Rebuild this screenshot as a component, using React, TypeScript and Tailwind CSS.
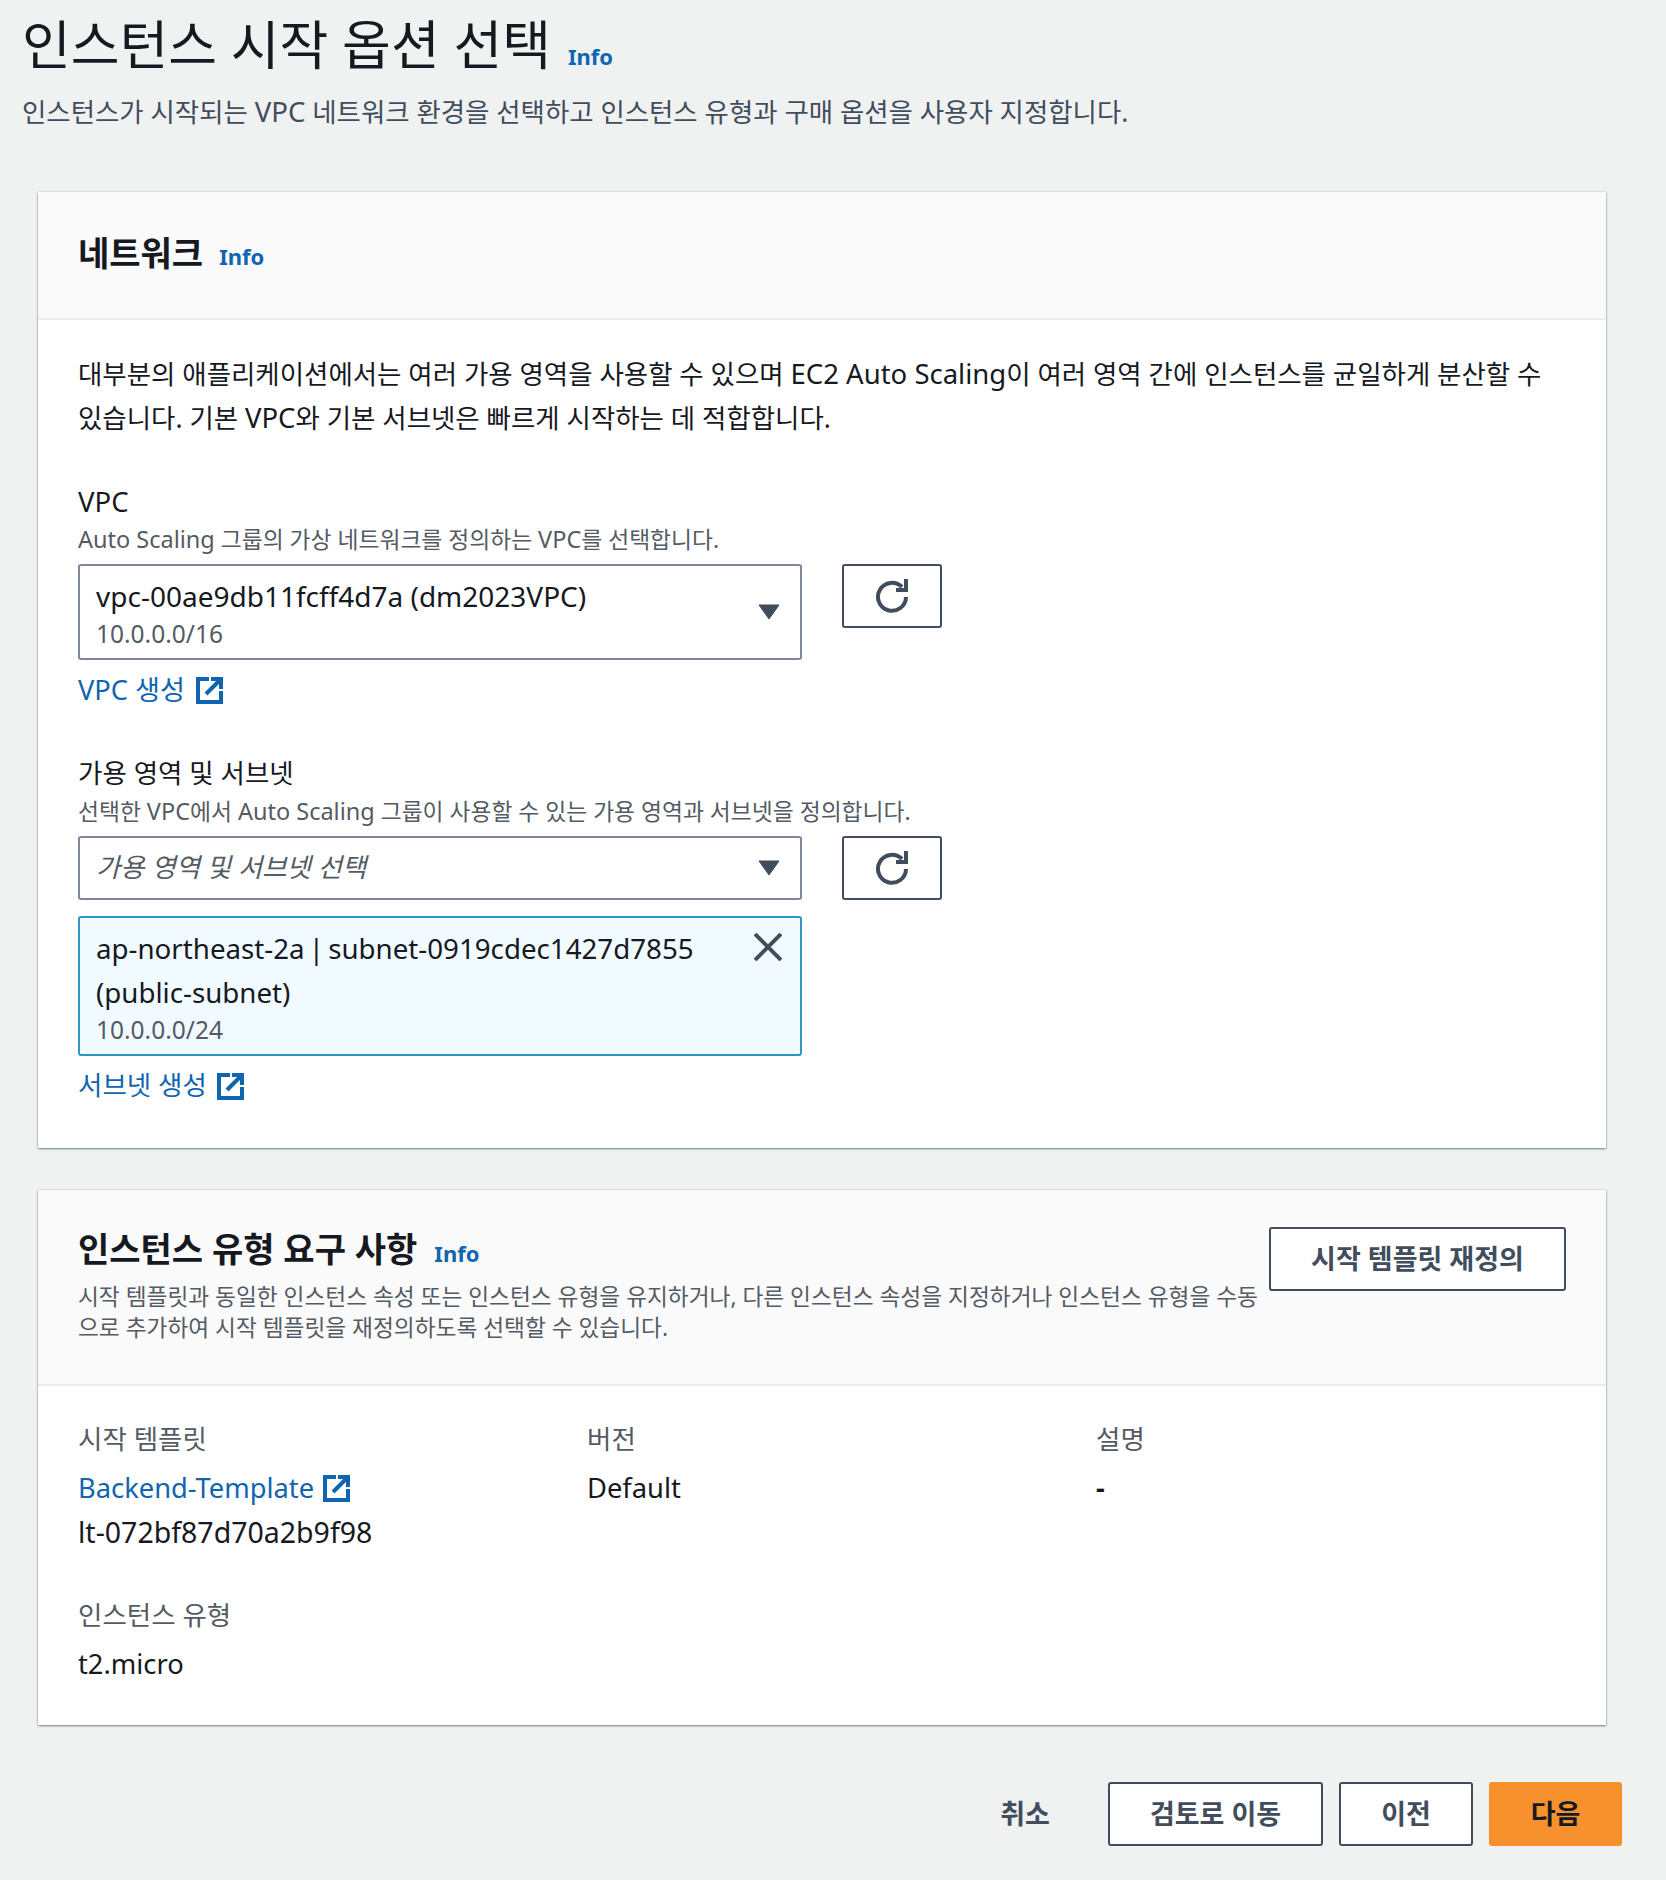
import React from "react";

const font = "font-['Noto_Sans','Noto_Sans_CJK_KR',sans-serif]";

function ExtIcon() {
  return (
    <svg width="27" height="27" viewBox="0 0 27 27" fill="none" stroke="#0f65b0" strokeWidth="4" className="shrink-0">
      <path d="M13 2H2v23h23V14" />
      <path d="M15 2h10v10" />
      <path d="M25 2 10 17" />
    </svg>
  );
}

function RefreshBtn() {
  return (
    <button className="w-[100px] h-[64px] shrink-0 border-2 border-[#414d5c] rounded-[3px] bg-white flex items-center justify-center">
      <svg width="34" height="34" viewBox="0 0 34 34" fill="none" stroke="#414d5c" strokeWidth="4">
        <path d="M31 18a14 14 0 1 1-4-10" />
        <path d="M31 0v11H21" />
      </svg>
    </button>
  );
}

function Caret() {
  return (
    <svg width="22" height="16" viewBox="0 0 22 16" className="shrink-0">
      <path d="M1 1h20L11 15z" fill="#414d5c" stroke="#414d5c" strokeLinejoin="round" />
    </svg>
  );
}

function Info({ cls }: { cls: string }) {
  return <span className={`text-[#0f65b0] font-bold text-[22px] leading-[32px] ${cls}`}>Info</span>;
}

export default function App() {
  return (
    <div className={`${font} w-[1666px] h-[1880px] bg-[#f0f2f2] text-[#16191f] overflow-hidden`}>
      <div className="pl-[22px] pt-[12px] h-[192px]">
        <div className="flex items-end">
          <h1 className="text-[53px] leading-[66px] font-normal text-[#16191f]">인스턴스 시작 옵션 선택</h1>
          <Info cls="ml-[17px] mb-[6px]" />
        </div>
        <p className="mt-[13px] text-[26.45px] leading-[40px] text-[#414d5c]">인스턴스가 시작되는 <span className="text-[27.6px]">VPC</span> 네트워크 환경을 선택하고 인스턴스 유형과 구매 옵션을 사용자 지정합니다.</p>
      </div>

      <section className="mx-[38px] w-[1568px] h-[956px] bg-white shadow-[0_1px_2px_rgba(0,28,36,0.5),0_0_1px_rgba(0,28,36,0.3)]">
        <header className="h-[128px] bg-[#fafafa] border-b-2 border-[#eaeded] px-[40px] flex items-center">
          <h2 className="text-[34px] leading-[48px] font-bold -mt-[4px]">네트워크</h2>
          <Info cls="ml-[16px] mt-[2px]" />
        </header>
        <div className="px-[40px] pt-[32px]">
          <p className="text-[26.47px] leading-[44px] w-[1490px]">대부분의 애플리케이션에서는 여러 가용 영역을 사용할 수 있으며 <span className="text-[27.5px]">EC2 Auto Scaling</span>이 여러 영역 간에 인스턴스를 균일하게 분산할 수<br />있습니다. 기본 <span className="text-[27.5px]">VPC</span>와 기본 서브넷은 빠르게 시작하는 데 적합합니다.</p>

          <div className="mt-[40px] text-[27.5px] leading-[44px]">VPC</div>
          <div className="text-[22.8px] leading-[32px] text-[#545b64] -mt-[1px]"><span className="text-[23.5px]">Auto Scaling</span> 그룹의 가상 네트워크를 정의하는 <span className="text-[23.5px]">VPC</span>를 선택합니다.</div>
          <div className="flex gap-[40px] mt-[8px]">
            <div className="w-[724px] h-[96px] border-2 border-[#7d8998] rounded-[3px] pl-[16px] pr-[20px] flex items-center justify-between">
              <div>
                <div className="text-[28px] leading-[44px]">vpc-00ae9db11fcff4d7a (dm2023VPC)</div>
                <div className="text-[24.5px] leading-[32px] text-[#545b64]">10.0.0.0/16</div>
              </div>
              <Caret />
            </div>
            <RefreshBtn />
          </div>
          <div className="flex items-center gap-[11px] mt-[8px] h-[44px] text-[27.2px] text-[#0f65b0]">VPC 생성 <ExtIcon /></div>

          <div className="mt-[39px] text-[26.5px] leading-[44px]">가용 영역 및 서브넷</div>
          <div className="text-[22.8px] leading-[32px] text-[#545b64]">선택한 <span className="text-[23.5px]">VPC</span>에서 <span className="text-[23.5px]">Auto Scaling</span> 그룹이 사용할 수 있는 가용 영역과 서브넷을 정의합니다.</div>
          <div className="flex gap-[40px] mt-[8px]">
            <div className="w-[724px] h-[64px] border-2 border-[#7d8998] rounded-[3px] pl-[16px] pr-[20px] flex items-center justify-between">
              <span className="text-[26.4px] italic text-[#545b64]">가용 영역 및 서브넷 선택</span>
              <Caret />
            </div>
            <RefreshBtn />
          </div>
          <div className="w-[724px] h-[140px] mt-[16px] border-2 border-[#2f95c5] rounded-[3px] bg-[#f1faff] pl-[16px] pr-[18px] flex justify-between">
            <div className="pt-[8px] w-[640px]">
              <div className="text-[27.7px] leading-[44px] [word-spacing:-3px]">ap-northeast-2a | subnet-0919cdec1427d7855 (public-subnet)</div>
              <div className="text-[24.5px] leading-[32px] text-[#545b64]">10.0.0.0/24</div>
            </div>
            <svg width="28" height="28" viewBox="0 0 28 28" stroke="#414d5c" strokeWidth="4" className="mt-[15px] shrink-0">
              <path d="M1 1l26 26M27 1 1 27" />
            </svg>
          </div>
          <div className="flex items-center gap-[10px] mt-[8px] h-[44px] text-[26.5px] text-[#0f65b0]">서브넷 생성 <ExtIcon /></div>
        </div>
      </section>

      <section className="mx-[38px] mt-[42px] w-[1568px] h-[535px] bg-white shadow-[0_1px_2px_rgba(0,28,36,0.5),0_0_1px_rgba(0,28,36,0.3)]">
        <header className="h-[196px] bg-[#fafafa] border-b-2 border-[#eaeded] px-[40px] pt-[36px] flex justify-between">
          <div className="w-[1190px]">
            <div className="flex items-center">
              <h2 className="text-[34px] leading-[46px] font-bold">인스턴스 유형 요구 사항</h2>
              <Info cls="ml-[17px] mt-[7px]" />
            </div>
            <p className="text-[22.7px] leading-[31px] text-[#545b64] mt-[9px]">시작 템플릿과 동일한 인스턴스 속성 또는 인스턴스 유형을 유지하거나, 다른 인스턴스 속성을 지정하거나 인스턴스 유형을 수동으로 추가하여 시작 템플릿을 재정의하도록 선택할 수 있습니다.</p>
          </div>
          <button className="w-[297px] h-[64px] mt-[1px] shrink-0 border-2 border-[#414d5c] rounded-[3px] bg-white font-bold text-[27px] text-[#414d5c]">시작 템플릿 재정의</button>
        </header>
        <div className="px-[40px] pt-[31px]">
          <div className="grid grid-cols-[509px_509px_1fr]">
            <div>
              <div className="text-[26.5px] leading-[44px] text-[#545b64]">시작 템플릿</div>
              <div className="flex items-center gap-[9px] mt-[5px] h-[44px] text-[27.3px] text-[#0f65b0]">Backend-Template <ExtIcon /></div>
              <div className="text-[28.5px] leading-[44px]">lt-072bf87d70a2b9f98</div>
            </div>
            <div>
              <div className="text-[26.5px] leading-[44px] text-[#545b64]">버전</div>
              <div className="mt-[5px] text-[27.3px] leading-[44px]">Default</div>
            </div>
            <div>
              <div className="text-[26.5px] leading-[44px] text-[#545b64]">설명</div>
              <div className="mt-[5px] text-[27.3px] leading-[44px] font-bold">-</div>
            </div>
          </div>
          <div className="mt-[39px] text-[26.5px] leading-[44px] text-[#545b64]">인스턴스 유형</div>
          <div className="mt-[5px] text-[27.3px] leading-[44px]">t2.micro</div>
        </div>
      </section>

      <footer className="flex justify-end items-center gap-[16px] pr-[44px] mt-[57px]">
        <button className="w-[130px] h-[64px] font-bold text-[27px] text-[#414d5c] mr-[2px]">취소</button>
        <button className="w-[215px] h-[64px] border-2 border-[#414d5c] rounded-[3px] bg-white font-bold text-[27px] text-[#414d5c]">검토로 이동</button>
        <button className="w-[134px] h-[64px] border-2 border-[#414d5c] rounded-[3px] bg-white font-bold text-[27px] text-[#414d5c]">이전</button>
        <button className="w-[133px] h-[64px] rounded-[3px] bg-[#f7912d] font-bold text-[27px] text-[#16191f]">다음</button>
      </footer>
    </div>
  );
}
